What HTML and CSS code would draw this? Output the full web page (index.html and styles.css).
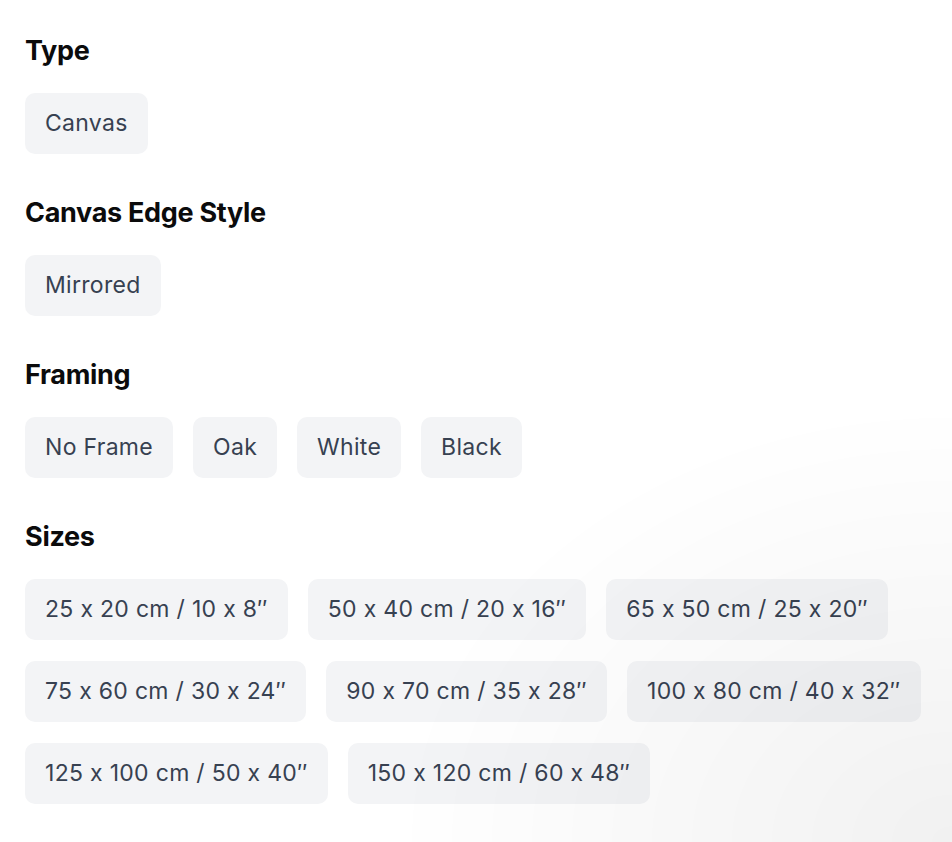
FILE: index.html
```html
<!DOCTYPE html>
<html lang="en">
<head>
  <meta charset="UTF-8" />
  <title>Print options</title>
  <link rel="stylesheet" href="styles.css">
</head>
<body>

  <div class="options">
    <section class="group">
      <h2>Type</h2>
      <div class="chips">
        <button class="chip">Canvas</button>
      </div>
    </section>

    <section class="group">
      <h2>Canvas Edge Style</h2>
      <div class="chips">
        <button class="chip">Mirrored</button>
      </div>
    </section>

    <section class="group">
      <h2>Framing</h2>
      <div class="chips">
        <button class="chip">No Frame</button>
        <button class="chip">Oak</button>
        <button class="chip">White</button>
        <button class="chip">Black</button>
      </div>
    </section>

    <section class="group">
      <h2>Sizes</h2>
      <div class="chips">
        <button class="chip">25 x 20 cm / 10 x 8″</button>
        <button class="chip">50 x 40 cm / 20 x 16″</button>
        <button class="chip">65 x 50 cm / 25 x 20″</button>
        <button class="chip">75 x 60 cm / 30 x 24″</button>
        <button class="chip">90 x 70 cm / 35 x 28″</button>
        <button class="chip">100 x 80 cm / 40 x 32″</button>
        <button class="chip">125 x 100 cm / 50 x 40″</button>
        <button class="chip">150 x 120 cm / 60 x 48″</button>
      </div>
    </section>
  </div>

</body>
</html>
```

FILE: styles.css
```css
body {
  margin: 0;
  padding: 35px 20px 35px 25px;
  font-family: Inter, "Liberation Sans", Arial, sans-serif;
  font-feature-settings: "calt" 0;
  background: #fff;
  color: #111;
}
body::after {
  content: "";
  position: fixed;
  inset: 0;
  pointer-events: none;
  background: radial-gradient(ellipse 560px 440px at 100% 100%, rgba(0, 0, 0, 0.055), rgba(0, 0, 0, 0) 100%);
}
.options {
  display: flex;
  flex-direction: column;
  gap: 43px;
}
.group h2 {
  margin: 0 0 26px;
  font-size: 27px;
  line-height: 32px;
  font-weight: 700;
  letter-spacing: -0.3px;
  color: #0b0b0c;
}
.chips {
  display: flex;
  flex-wrap: wrap;
  gap: 21px 20px;
}
.chip {
  font-family: inherit;
  font-feature-settings: "calt" 0;
  font-size: 23px;
  line-height: 29px;
  letter-spacing: 0.3px;
  padding: 16px 20px;
  border: none;
  border-radius: 10px;
  background-color: #f3f4f6;
  color: #374151;
  cursor: pointer;
}
```
